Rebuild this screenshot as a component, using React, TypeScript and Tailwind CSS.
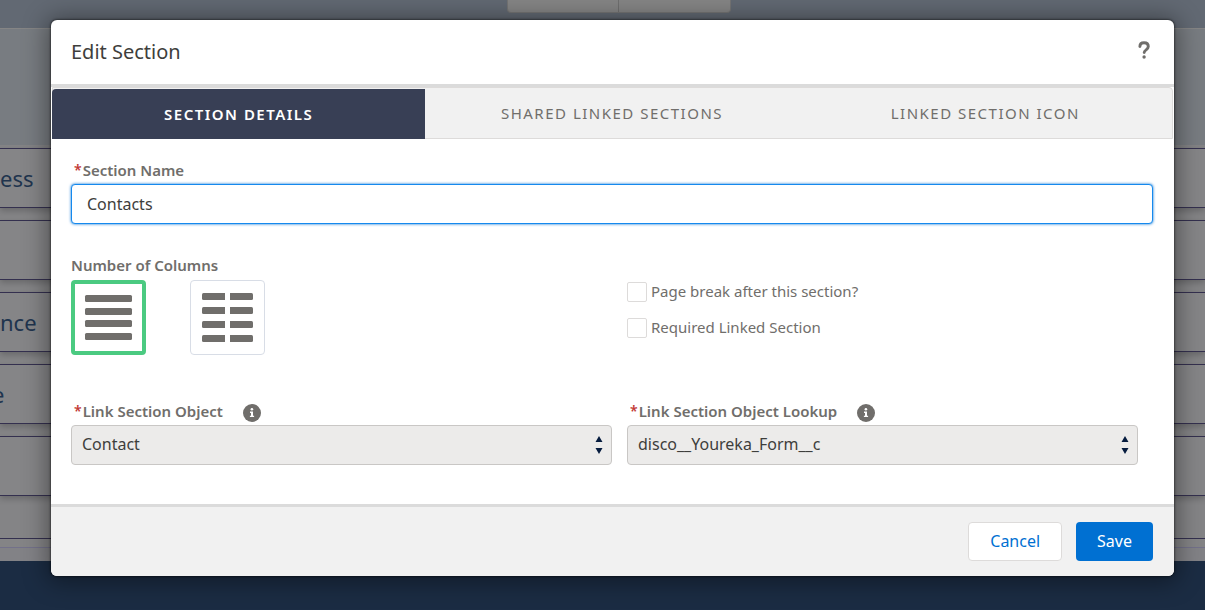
import { useState, type ReactNode } from 'react';

const tabs = ['Section Details', 'Shared Linked Sections', 'Linked Section Icon'];

const backgroundRows = ['ess', '', 'nce', 'e', ''];

const Label = ({ htmlFor, required, children }: { htmlFor?: string; required?: boolean; children: ReactNode }) => (
  <label htmlFor={htmlFor} className="flex h-[25px] text-[15px] leading-[22px] font-semibold text-[#706e6b]">
    {required && <abbr title="required" className="ml-[3px] mr-px text-sm leading-[22px] text-[#c23934] no-underline">*</abbr>}
    {children}
  </label>
);

const InfoIcon = () => (
  <svg viewBox="0 0 18 18" className="h-[18px] w-[18px]" aria-hidden="true">
    <circle cx="9" cy="9" r="9" fill="#706e6b" />
    <circle cx="8.9" cy="5.3" r="1.3" fill="#fff" />
    <path d="M7 7.6h3v4.2h1.1v1.3H6.9v-1.3H8V8.9H7z" fill="#fff" />
  </svg>
);

const SelectField = ({ id, label, value }: { id: string; label: string; value: string }) => (
  <div className="pr-[15px]">
    <div className="flex gap-5">
      <Label htmlFor={id} required>{label}</Label>
      <button type="button" aria-label={`Help: ${label}`} className="flex items-center">
        <InfoIcon />
      </button>
    </div>
    <div className="relative">
      <select
        id={id}
        defaultValue={value}
        className="block h-10 w-full appearance-none rounded border border-[#c9c7c5] bg-[#ecebea] px-[10px] pb-0.5 text-base text-[#3e3e3c] outline-none"
      >
        <option>{value}</option>
      </select>
      <svg viewBox="0 0 8 20" className="pointer-events-none absolute top-[10px] right-[9px] h-5 w-2" aria-hidden="true">
        <path d="M4 1l3.5 6h-7zM4 19l3.5-6h-7z" fill="#061c3f" />
      </svg>
    </div>
  </div>
);

const CheckboxField = ({ label }: { label: string }) => (
  <label className="flex h-5 gap-1 text-[15px] leading-[19px] text-[#706e6b]">
    <input type="checkbox" className="h-5 w-5 appearance-none rounded-xs border border-[#dddbda] bg-white checked:bg-[#0070d2]" />
    {label}
  </label>
);

const OneColumnIcon = () => (
  <svg viewBox="0 0 75 75" className="h-[75px] w-[75px] shrink-0" fill="#706e6b" aria-hidden="true">
    {[15, 28, 40, 53].map(y => (
      <rect key={y} x="14" y={y} width="47" height="7" rx="1.5" />
    ))}
  </svg>
);

const TwoColumnIcon = () => (
  <svg viewBox="0 0 75 75" className="h-[75px] w-[75px] shrink-0" fill="#706e6b" aria-hidden="true">
    {[13, 27, 41, 55].map(y => (
      <g key={y}>
        <path d={`M13.500 ${y}h21.500v7h-21.500q-1.500 0-1.500-1.500v-4q0-1.500 1.500-1.500z`} />
        <path d={`M40 ${y}h21.500q1.500 0 1.500 1.500v4q0 1.500-1.500 1.500h-21.500z`} />
      </g>
    ))}
  </svg>
);

const PageBackground = () => (
  <div className="absolute inset-0 flex flex-col overflow-hidden bg-[#848486]" aria-hidden="true">
    <div className="flex h-[29px] shrink-0 items-start justify-center border-b border-[#858585] bg-[#626973]">
      <div className="ml-8 flex h-[13px] w-56 divide-x divide-[#6f6f6f] rounded-b border border-t-0 border-[#747474] bg-[#858585]">
        <div className="flex-1" />
        <div className="flex-1" />
      </div>
    </div>
    <div className="h-[116px] shrink-0 bg-[#787c81]" />
    <div className="h-[394px] shrink-0 border-b border-[#34304f] pt-[3px]">
      {backgroundRows.map((text, i) => (
        <div
          key={i}
          className="mb-3 flex h-[60px] items-center border-y border-[#34304f] bg-[#858587] text-[22px] text-[#20344e] shadow-[0_3px_6px_rgba(0,0,0,0.2)]"
        >
          <span className={text === 'e' ? '-ml-2' : ''}>{text}</span>
        </div>
      ))}
    </div>
    <div className="h-[9px] shrink-0 border-b border-[#73718a]" />
    <div className="h-[13px] shrink-0 bg-[#828286]" />
    <div className="flex-1 bg-[#1b2c43]" />
  </div>
);

const App = () => {
  const [activeTab, setActiveTab] = useState(0);
  const [columns, setColumns] = useState(1);
  const [name, setName] = useState('Contacts');

  return (
    <div className="relative min-h-screen font-['Noto_Sans','Open_Sans',sans-serif]">
      <PageBackground />

      <div className="relative pt-5 pr-[31px] pb-8 pl-[51px]">
        <div
          role="dialog"
          aria-labelledby="dialog-title"
          className="overflow-hidden rounded-md bg-white shadow-[0_0_2px_1px_rgba(0,0,0,0.4),0_2px_24px_4px_rgba(0,0,0,0.4)]"
        >
          <header className="flex h-[67px] items-center justify-between border-b-[3px] border-[#dbdbdb] px-5">
            <h2 id="dialog-title" className="text-xl text-[#3e3e3c]">Edit Section</h2>
            <button type="button" aria-label="Help" className="mr-1 mb-1 text-[#706e6b]">
              <svg viewBox="0 0 12 18" className="h-[18px] w-3" fill="none" aria-hidden="true">
                <path d="M1.900 5.600C1.900 3.100 3.600 1.700 6 1.700c2.500 0 4.300 1.500 4.300 3.900 0 3.300-4.100 3.100-4.100 6" stroke="currentColor" strokeWidth="2.900" strokeLinecap="round" />
                <circle cx="6.100" cy="16" r="1.700" fill="currentColor" />
              </svg>
            </button>
          </header>

          <div role="tablist" className="mx-px flex h-[52px] rounded-tr border border-[#dddbda] bg-[#f1f1f1]">
            {tabs.map((tab, i) => (
              <button
                key={tab}
                type="button"
                role="tab"
                aria-selected={i === activeTab}
                onClick={() => setActiveTab(i)}
                className={`-mb-px flex-1 text-[15px] tracking-widest uppercase ${
                  i === activeTab ? 'mt-px -ml-px rounded-tl bg-[#383f55] font-semibold text-white' : 'text-[#706e6b]'
                }`}
              >
                {tab}
              </button>
            ))}
          </div>

          <form id="section-form" className="pt-5 pr-[21px] pb-[39px] pl-5" onSubmit={e => e.preventDefault()}>
            <Label htmlFor="section-name" required>Section Name</Label>
            <input
              id="section-name"
              type="text"
              value={name}
              onChange={e => setName(e.target.value)}
              className="block h-10 w-full rounded border border-[#1589ee] bg-white px-[15px] text-base text-[#3e3e3c] shadow-[0_0_3px_#0070d2] outline-none"
            />

            <div className="mt-[30px] grid grid-cols-[556fr_526fr]">
              <div role="group" aria-label="Number of Columns">
                <Label>Number of Columns</Label>
                <div className="mt-px flex gap-11">
                  {[1, 2].map(n => (
                    <button
                      key={n}
                      type="button"
                      aria-label={n === 1 ? 'One column' : 'Two columns'}
                      aria-pressed={columns === n}
                      onClick={() => setColumns(n)}
                      className={`flex h-[75px] w-[75px] items-center justify-center rounded ${
                        columns === n ? 'border-4 border-[#4bca81]' : 'border border-[#d8dde6]'
                      }`}
                    >
                      {n === 1 ? <OneColumnIcon /> : <TwoColumnIcon />}
                    </button>
                  ))}
                </div>
              </div>
              <div className="flex flex-col gap-4 pt-7">
                <CheckboxField label="Page break after this section?" />
                <CheckboxField label="Required Linked Section" />
              </div>
            </div>

            <div className="mt-[45px] grid grid-cols-[556fr_526fr]">
              <SelectField id="link-object" label="Link Section Object" value="Contact" />
              <SelectField id="link-lookup" label="Link Section Object Lookup" value="disco__Youreka_Form__c" />
            </div>
          </form>

          <footer className="flex h-[72px] items-center justify-end gap-[14px] border-t-[3px] border-[#dbdbdb] bg-[#f1f1f1] px-[21px]">
            <button type="button" className="h-[39px] rounded border border-[#dddbda] bg-white px-[21px] pb-0.5 text-base text-[#0070d2]">
              Cancel
            </button>
            <button type="submit" form="section-form" className="h-[39px] rounded bg-[#0070d2] px-[21px] pb-0.5 text-base text-white">
              Save
            </button>
          </footer>
        </div>
      </div>
    </div>
  );
};

export default App;
